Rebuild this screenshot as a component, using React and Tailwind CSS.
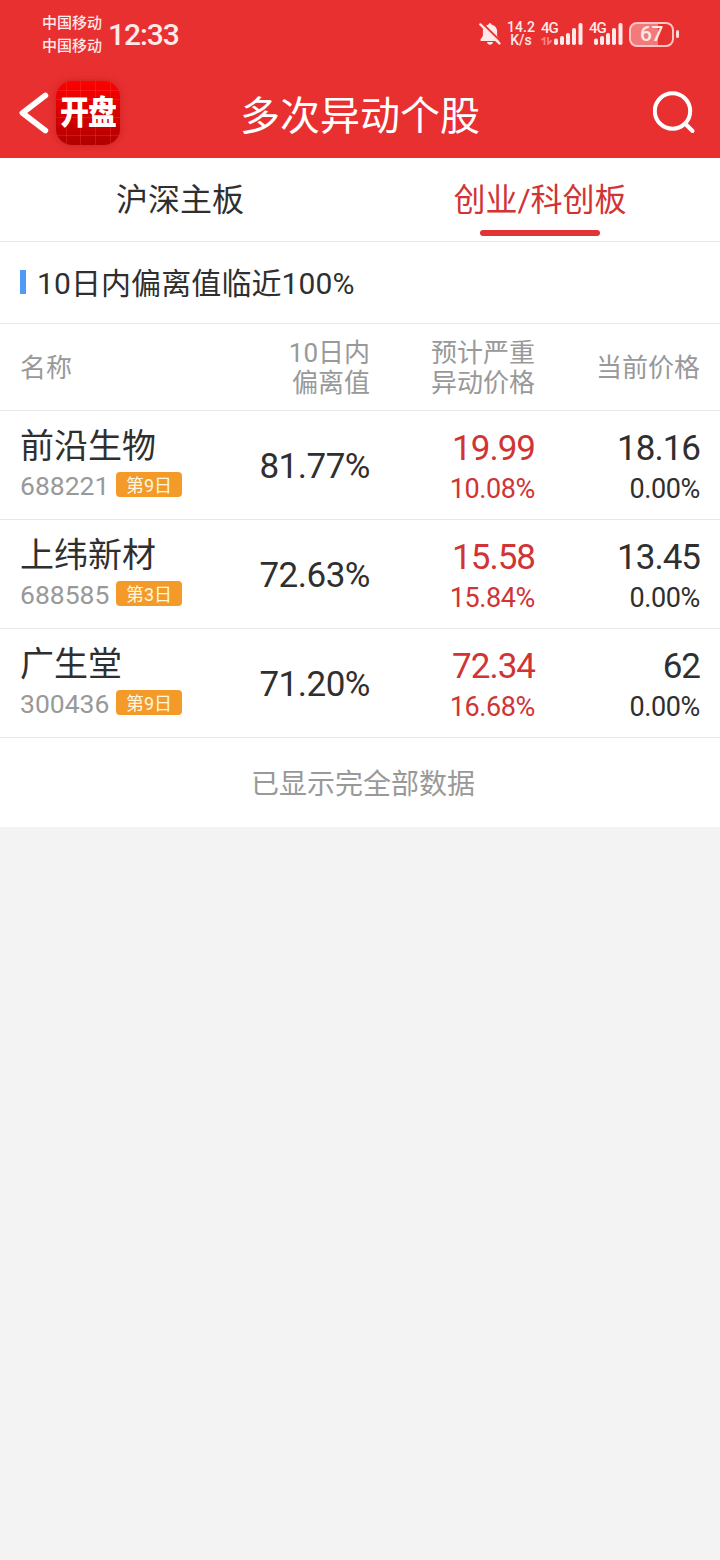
import React from 'react'

const stocks = [
  { name: '前沿生物', code: '688221', day: '第9日', deviation: '81.77%', target: '19.99', targetPct: '10.08%', price: '18.16', pricePct: '0.00%' },
  { name: '上纬新材', code: '688585', day: '第3日', deviation: '72.63%', target: '15.58', targetPct: '15.84%', price: '13.45', pricePct: '0.00%' },
  { name: '广生堂', code: '300436', day: '第9日', deviation: '71.20%', target: '72.34', targetPct: '16.68%', price: '62', pricePct: '0.00%' },
]

function MutedBell() {
  return (
    <svg className="w-[22px] h-6 shrink-0" viewBox="0 0 22 24" fill="none">
      <path d="M11 1.2c-1 0-1.6.7-1.6 1.5C6.1 3.4 3.9 6 3.9 9v5L1.6 17.2v1.8h18.8v-1.8L18.1 14V9c0-3-2.2-5.6-5.5-6.3 0-.8-.6-1.5-1.6-1.5z" fill="#ffe9e9" />
      <path d="M8 20h6c-.4 1.8-1.4 2.700-3 2.700S8.400 21.800 8 20z" fill="#ffe9e9" />
      <path d="M2.900 1L22 19.600" stroke="#e93030" strokeWidth="2" />
      <path d="M1.400 2.400L20.400 21.400" stroke="#ffe9e9" strokeWidth="2.400" strokeLinecap="round" />
    </svg>
  )
}

function Bars() {
  return (
    <svg className="ml-auto h-6 w-[29px]" viewBox="0 0 29 24" fill="#ffe9e9">
      <rect x="0" y="16.5" width="4" height="6.5" rx="1.8" />
      <rect x="6" y="14" width="4" height="9" rx="1.8" />
      <rect x="12" y="11" width="4" height="12" rx="1.8" />
      <rect x="18" y="6" width="4" height="17" rx="1.8" />
      <rect x="24.5" y="1" width="4" height="22" rx="1.8" />
    </svg>
  )
}

function Signal({ data }) {
  return (
    <div className={data ? 'relative w-[42px]' : 'relative w-[34px]'}>
      <Bars />
      {data && (
        <svg className="absolute left-0 top-[15px] h-2 w-[11px]" viewBox="0 0 11 8" fill="none" stroke="#ff7f7f" strokeWidth="1.8">
          <path d="M.5 3L3.500 1v7M7 0v7l3.500-3.500" />
        </svg>
      )}
      <span className="absolute left-0 -top-px text-[15px] leading-[15px] font-medium tracking-[-1px]">4G</span>
    </div>
  )
}

function Battery() {
  return (
    <div className="flex items-center gap-[2px]">
      <div className="flex h-[25px] w-[45px] items-center justify-center rounded-[8px] border-2 border-[#ffc4c4] bg-[linear-gradient(to_right,#f37a7a_67%,#e93030_67%)] pt-px text-[21px] leading-none font-medium tracking-[-0.5px]">
        67
      </div>
      <div className="h-2 w-[3px] rounded-full bg-[#ffdcdc]" />
    </div>
  )
}

function StatusBar() {
  return (
    <div className="flex h-[68px] items-center pl-[42px] pr-[41px] text-[#ffe9e9]">
      <div className="pt-px text-[15px] leading-[23px] font-medium">
        <div>中国移动</div>
        <div>中国移动</div>
      </div>
      <div className="ml-[6px] mt-[2px] text-[30px] leading-none font-medium tracking-[-1.1px]">12:33</div>
      <div className="ml-auto flex items-center">
        <MutedBell />
        <div className="ml-[6px] w-[28px] text-center text-[14px] leading-[13px] font-medium">
          <div>14.2</div>
          <div>K/s</div>
        </div>
        <div className="ml-[6px] flex gap-[6px]">
          <Signal data />
          <Signal />
        </div>
        <div className="ml-[6px]">
          <Battery />
        </div>
      </div>
    </div>
  )
}

function AppLogo() {
  return (
    <div className="relative ml-[7px] h-16 w-16 shrink-0 overflow-hidden rounded-[16px] bg-gradient-to-b from-[#ff0000] to-[#b00000] shadow-[0_0_8px_rgba(120,0,0,0.3)]">
      <svg className="absolute inset-0 h-16 w-16" viewBox="0 0 64 64" stroke="#ff5a4a" strokeOpacity="0.25">
        <path d="M10.500 0v64M24.500 0v64M39.500 0v64M54.500 0v64M0 9.500h64M0 18.500h64M0 36.500h64M0 54.500h64" />
      </svg>
      <div className="relative origin-center scale-y-115 whitespace-nowrap text-center text-[29px] leading-[64px] font-black tracking-[-1px] text-white">开盘</div>
    </div>
  )
}

function NavBar() {
  return (
    <div className="flex h-[90px] items-center pl-[19px] pr-[23px]">
      <div className="flex w-[221px] items-center">
        <svg className="h-[44px] w-[30px]" viewBox="0 0 30 44" fill="none">
          <path d="M26.300 4.500L3.500 22L26.300 39.500" stroke="#fff" strokeWidth="5.8" strokeLinecap="round" strokeLinejoin="round" />
        </svg>
        <AppLogo />
      </div>
      <h1 className="whitespace-nowrap pt-[7px] text-[40px] leading-none text-white">多次异动个股</h1>
      <svg className="ml-auto h-[44px] w-[44px]" viewBox="0 0 44 44" fill="none">
        <circle cx="19.5" cy="20" r="17.700" stroke="#fff" strokeWidth="4" />
        <path d="M32 32.500L39.500 40" stroke="#fff" strokeWidth="4" strokeLinecap="round" />
      </svg>
    </div>
  )
}

function StockRow({ stock }) {
  return (
    <div className="flex h-[109px] border-b border-[#e8e8e8] px-5 text-[#2f2f2f]">
      <div className="w-[200px] pt-[15px]">
        <div className="text-[34px] leading-[40px]">{stock.name}</div>
        <div className="mt-[3px] flex items-center">
          <span className="w-[96px] text-[26.5px] leading-[34px] text-[#999]">{stock.code}</span>
          <span className="-mt-[4px] flex h-[25px] w-[66px] items-center justify-center rounded-[4px] bg-[#f39a28] pt-[3px] text-[18px] leading-none text-[#fff8e0]">{stock.day}</span>
        </div>
      </div>
      <div className="w-[150px] text-right text-[35px] leading-[111px] tracking-[-0.5px]">{stock.deviation}</div>
      <div className="w-[165px] pt-[17px] text-right text-[#d03434]">
        <div className="text-[35px] leading-[42px] tracking-[-1px]">{stock.target}</div>
        <div className="text-[27px] leading-[39px] tracking-[-0.4px]">{stock.targetPct}</div>
      </div>
      <div className="w-[165px] pt-[17px] text-right">
        <div className="text-[35px] leading-[42px] tracking-[-1px]">{stock.price}</div>
        <div className="text-[27px] leading-[39px] tracking-[-0.4px]">{stock.pricePct}</div>
      </div>
    </div>
  )
}

export default function App() {
  return (
    <div className="min-h-[1560px] w-[720px] bg-[#f3f3f3] font-['Roboto','Noto_Sans_CJK_SC',sans-serif]">
      <header className="h-[158px] bg-[#e93030]">
        <StatusBar />
        <NavBar />
      </header>
      <main className="bg-white">
        <div className="grid h-[84px] grid-cols-2 border-b border-[#e8e8e8] text-center text-[32px] leading-[85px] text-[#2f2f2f]">
          <div>沪深主板</div>
          <div className="flex flex-col items-center text-[#d03434]">
            <span className="h-[72px]">创业/科创板</span>
            <span className="h-[6px] w-[120px] rounded-[3px] bg-[#e13535]" />
          </div>
        </div>
        <div className="flex h-[82px] items-center border-b border-[#e8e8e8] pl-5 text-[30px] text-[#2f2f2f]">
          <span className="mr-[11px] -mt-px h-6 w-[6px] bg-[#4d9bf5]" />
          <span className="pt-[2px] tracking-[0.1px]">10日内偏离值临近100%</span>
        </div>
        <div className="flex h-[87px] items-center border-b border-[#e8e8e8] px-5 pt-[2px] text-[26px] leading-[30px] text-[#999]">
          <div className="w-[200px]">名称</div>
          <div className="w-[150px] text-right">10日内<br />偏离值</div>
          <div className="w-[165px] text-right">预计严重<br />异动价格</div>
          <div className="w-[165px] text-right">当前价格</div>
        </div>
        {stocks.map((stock) => <StockRow key={stock.code} stock={stock} />)}
        <div className="h-[89px] pl-[6px] text-center text-[28px] leading-[94px] text-[#999]">已显示完全部数据</div>
      </main>
    </div>
  )
}
